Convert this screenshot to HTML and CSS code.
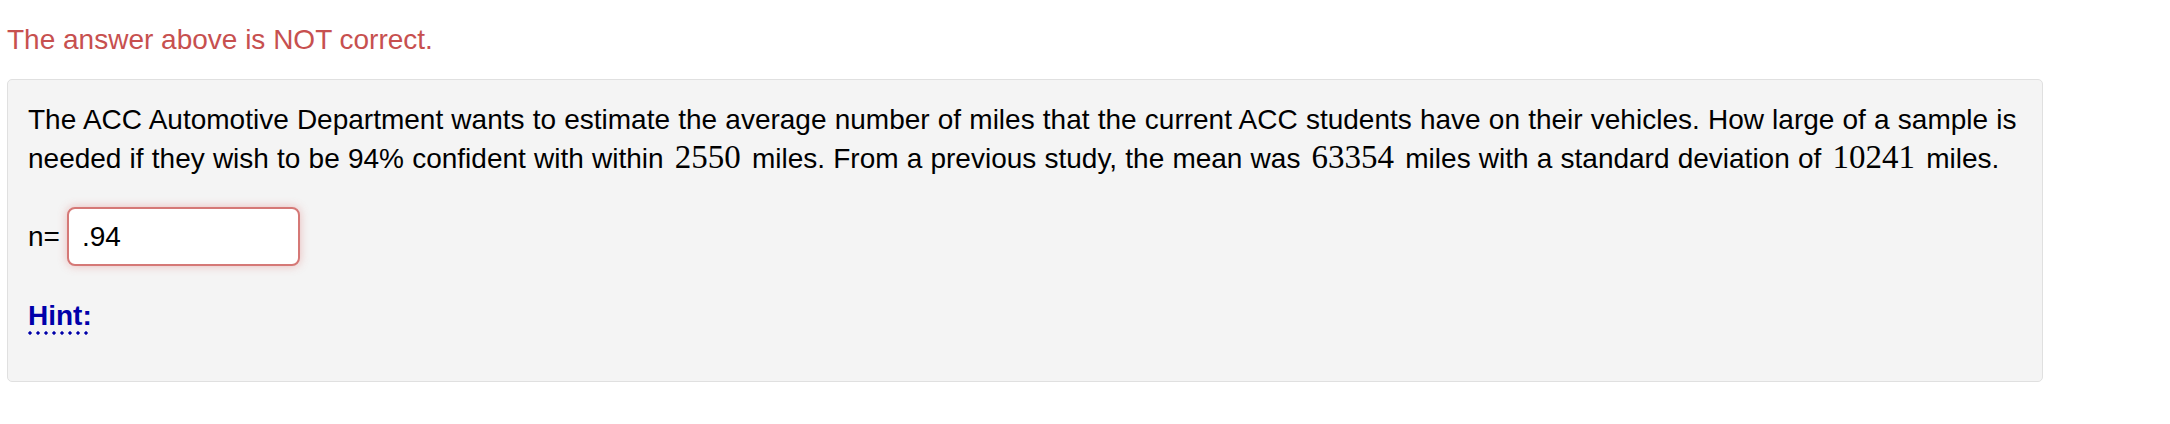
FILE: index.html
```html
<!DOCTYPE html>
<html lang="en">
<head>
<meta charset="utf-8">
<title>Problem</title>
<link rel="stylesheet" href="styles.css">
</head>
<body>
<div class="page">
  <div class="result-msg">The answer above is NOT correct.</div>
  <div class="problem">
    <p class="statement"><span class="seg">The ACC Automotive Department wants to estimate the average number of miles that the current ACC students have on their vehicles. How large of a sample is</span> <span class="seg">needed if they wish to be 94% confident with within</span> <span class="math">2550</span> <span class="seg">miles. From a previous study, the mean was</span> <span class="math">63354</span> <span class="seg">miles with a standard deviation of</span> <span class="math">10241</span> <span class="seg">miles.</span></p>
    <div class="answer-row">
      <label class="answer-label" for="ans">n=</label>
      <input class="answer-input incorrect" id="ans" type="text" value=".94">
    </div>
    <div class="hint-row"><span class="hint">Hint:</span></div>
  </div>
</div>
</body>
</html>
```
FILE: styles.css
```css
html, body {
  margin: 0;
  padding: 0;
  background: #ffffff;
}

body {
  font-family: "Liberation Sans", Arial, Helvetica, sans-serif;
  font-size: 28px;
  line-height: 39px;
  color: #000000;
}

.page {
  padding: 20px 7px 0 7px;
}

.result-msg {
  color: #c7504f;
}

.problem {
  box-sizing: border-box;
  width: 2036px;
  margin-top: 20px;
  padding: 20px 20px 46px 20px;
  background: #f4f4f4;
  border: 1px solid #e0e0e0;
  border-radius: 5px;
}

.statement {
  margin: 0;
  word-spacing: 0.4px;
}

.math {
  font-family: "Liberation Serif", "Times New Roman", serif;
  font-size: 33px;
  line-height: 28px;
  margin: 0 3px;
}

.answer-row {
  display: flex;
  align-items: center;
  gap: 7px;
  margin-top: 29px;
}

.answer-input {
  box-sizing: border-box;
  width: 233px;
  height: 59px;
  padding: 0 13px;
  font-family: "Liberation Sans", Arial, Helvetica, sans-serif;
  font-size: 28px;
  color: #000000;
  background: #ffffff;
  border: 2px solid #d57876;
  border-radius: 8px;
  outline: none;
}

.answer-input.incorrect {
  box-shadow: 0 0 10px rgba(214, 80, 78, 0.35);
}

.hint-row {
  margin-top: 30px;
}

.hint {
  color: #0000aa;
  font-weight: bold;
  padding-bottom: 4px;
  background-image: radial-gradient(circle, #0000aa 1.4px, transparent 1.9px);
  background-size: 8px 4px;
  background-repeat: repeat-x;
  background-position: -2px 100%;
}
```
